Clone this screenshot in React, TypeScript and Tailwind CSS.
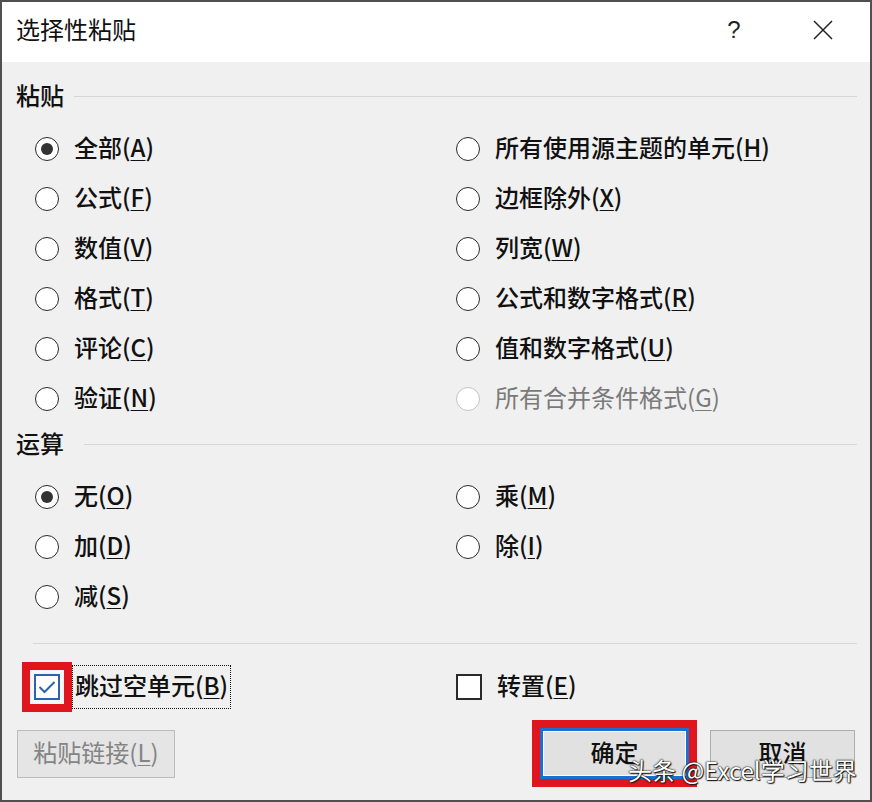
import React from "react";

const FONT = "font-['Noto_Sans_CJK_SC','Microsoft_YaHei',sans-serif]";

function Label({ text, k, disabled }: { text: string; k: string; disabled?: boolean }) {
  return (
    <span
      className={`text-[24px] leading-none whitespace-nowrap font-medium -translate-y-[2px] ${
        disabled ? "text-[#7a7a7a] font-normal" : "text-[#111]"
      }`}
    >
      {text}(<span className="underline underline-offset-[3px] decoration-1">{k}</span>)
    </span>
  );
}

function Radio({ text, k, checked, disabled }: { text: string; k: string; checked?: boolean; disabled?: boolean }) {
  return (
    <div className="h-[50px] flex items-center gap-[15px]">
      <span
        className={`w-[24px] h-[24px] rounded-full bg-white flex items-center justify-center border-[1.5px] ${
          disabled ? "border-[#c4c4c4]" : "border-[#2a2a2a]"
        }`}
      >
        {checked && <span className="w-[12px] h-[12px] rounded-full bg-[#333]" />}
      </span>
      <Label text={text} k={k} disabled={disabled} />
    </div>
  );
}

export default function App() {
  return (
    <div className={`relative w-[872px] h-[802px] overflow-hidden border-2 border-[#505050] bg-[#f0f0f0] ${FONT}`}>
      {/* Title bar */}
      <div className="h-[60px] bg-white flex items-center pl-[14px]">
        <span className="text-[24px] leading-none text-[#111] -translate-y-[3px]">选择性粘贴</span>
        <div className="flex-1" />
        <div className="w-[40px] flex justify-center">
          <span className="font-['Liberation_Sans',sans-serif] text-[24px] leading-none text-[#222] -translate-y-[2px]">?</span>
        </div>
        <div className="w-[49px]" />
        <div className="w-[40px] flex justify-center -translate-y-[2px]">
          <svg width="20" height="20" viewBox="0 0 20 20">
            <path d="M1 1 L19 19 M19 1 L1 19" stroke="#222" strokeWidth="1.5" fill="none" />
          </svg>
        </div>
        <div className="w-[27px]" />
      </div>

      {/* 粘贴 header */}
      <div className="h-[62px] pt-[10px] flex items-center pl-[14px] pr-[13px]">
        <span className="text-[24px] leading-none text-[#111] font-medium -translate-y-[3px]">粘贴</span>
        <div className="flex-1 h-px bg-[#d6d6d6] ml-[10px] -mt-[4px]" />
      </div>

      <div className="grid grid-cols-[421px_1fr] pl-[33px]">
        <div className="flex flex-col">
          <Radio text="全部" k="A" checked />
          <Radio text="公式" k="F" />
          <Radio text="数值" k="V" />
          <Radio text="格式" k="T" />
          <Radio text="评论" k="C" />
          <Radio text="验证" k="N" />
        </div>
        <div className="flex flex-col">
          <Radio text="所有使用源主题的单元" k="H" />
          <Radio text="边框除外" k="X" />
          <Radio text="列宽" k="W" />
          <Radio text="公式和数字格式" k="R" />
          <Radio text="值和数字格式" k="U" />
          <Radio text="所有合并条件格式" k="G" disabled />
        </div>
      </div>

      {/* 运算 header */}
      <div className="h-[48px] pb-[6px] flex items-center pl-[14px] pr-[13px]">
        <span className="text-[24px] leading-none text-[#111] font-medium -translate-y-[2px]">运算</span>
        <div className="flex-1 h-px bg-[#d6d6d6] ml-[20px] -mt-[2px]" />
      </div>

      <div className="grid grid-cols-[421px_1fr] pl-[33px]">
        <div className="flex flex-col">
          <Radio text="无" k="O" checked />
          <Radio text="加" k="D" />
          <Radio text="减" k="S" />
        </div>
        <div className="flex flex-col">
          <Radio text="乘" k="M" />
          <Radio text="除" k="I" />
        </div>
      </div>

      {/* separator */}
      <div className="mt-[21px] ml-[31px] mr-[13px] h-px bg-[#d6d6d6]" />

      {/* checkboxes */}
      <div className="mt-[18px] h-[50px] grid grid-cols-[434px_1fr] pl-[20px] items-center">
        <div className="flex items-center">
          <div className="w-[50px] h-[50px] border-[8px] border-[#e0161e] bg-[#f7f7f7] flex items-center justify-center">
            <span className="w-[26px] h-[26px] border-2 border-[#2d63ae] bg-white flex items-center justify-center">
              <svg width="18" height="14" viewBox="0 0 18 14">
                <path d="M1.5 7 L6.5 12 L16.5 2" stroke="#2d63ae" strokeWidth="2" fill="none" />
              </svg>
            </span>
          </div>
          <div className="h-[44px] flex items-center px-[2px] border border-dotted border-[#111]">
            <Label text="跳过空单元" k="B" />
          </div>
        </div>
        <div className="flex items-center gap-[15px]">
          <span className="w-[26px] h-[26px] border-2 border-[#2a2a2a] bg-white" />
          <Label text="转置" k="E" />
        </div>
      </div>

      {/* buttons */}
      <div className="mt-[8px] h-[67px] flex items-center pl-[15px] pr-[15px]">
        <button className="w-[158px] h-[48px] bg-[#e5e5e5] border border-[#bcbcbc] text-[#848484] flex items-center justify-center">
          <span className="text-[24px] leading-none whitespace-nowrap -translate-y-[2px]">
            粘贴链接(<span className="underline underline-offset-[3px] decoration-1">L</span>)
          </span>
        </button>
        <div className="flex-1" />
        <div className="w-[165px] h-[67px] border-[8px] border-[#e0161e] flex">
          <button className="flex-1 bg-[#e1e1e1] border-[3px] border-[#1b6fd1] shadow-[inset_0_0_0_1px_#ffffff] flex items-center justify-center">
            <span className="text-[24px] leading-none text-[#111] font-medium -translate-y-[2px]">确定</span>
          </button>
        </div>
        <div className="w-[13px]" />
        <button className="w-[145px] h-[48px] bg-[#e1e1e1] border border-[#adadad] flex items-center justify-center">
          <span className="text-[24px] leading-none text-[#111] font-medium -translate-y-[2px]">取消</span>
        </button>
      </div>

      {/* watermark */}
      <div className="absolute left-[626px] top-[753px] text-[24px] leading-[30px] whitespace-nowrap text-white [text-shadow:0_0_2px_#000,0_0_1px_#000,1px_1px_1px_#222]">
        头条 @Excel学习世界
      </div>
    </div>
  );
}
